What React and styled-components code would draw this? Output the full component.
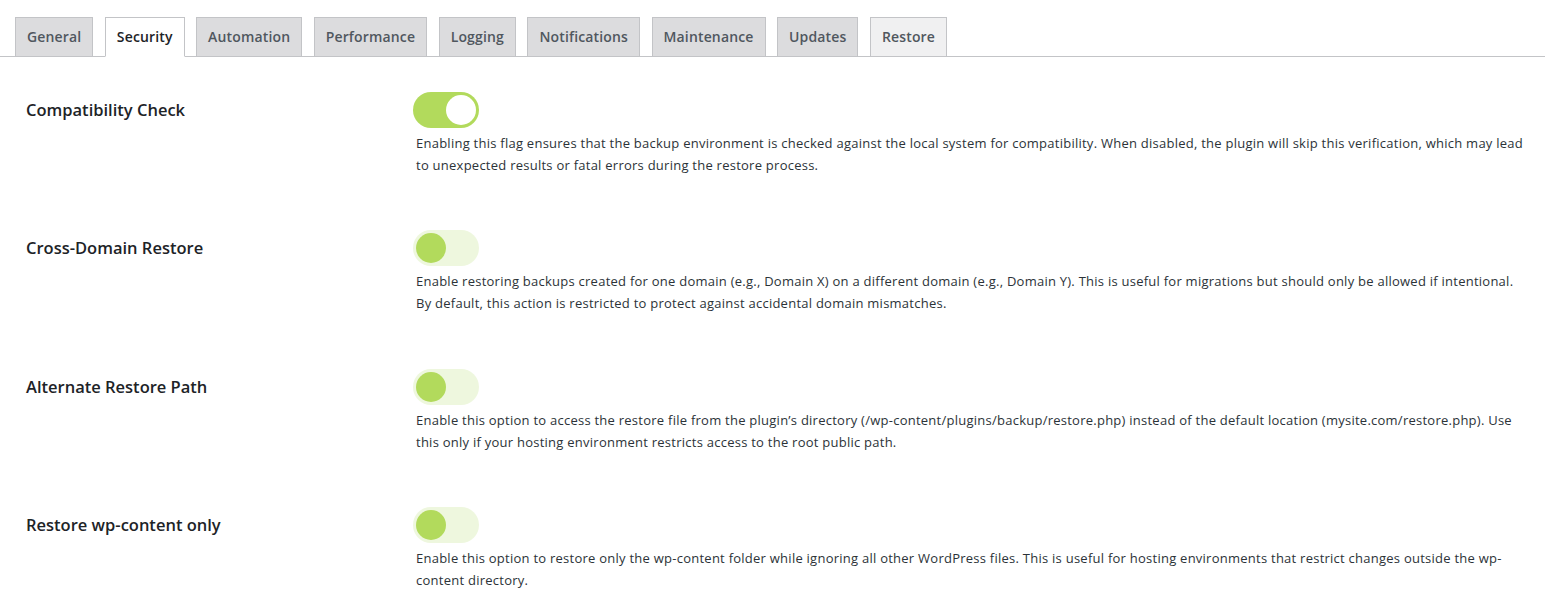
import React, { useState } from 'react'
import styled, { createGlobalStyle } from 'styled-components'

const GlobalStyle = createGlobalStyle`
  html, body {
    margin: 0;
    padding: 0;
    background: #fff;
    font-family: 'Open Sans', 'Noto Sans', sans-serif;
  }
`

const Page = styled.div`
  padding: 17px 0 0 0;
`

const TabBar = styled.nav`
  display: flex;
  gap: 11.5px;
  padding-left: 15px;
  border-bottom: 1px solid #c3c4c7;
`

const Tab = styled.a`
  display: block;
  height: 38px;
  line-height: 38px;
  padding: 0 11px;
  margin-bottom: -1px;
  font-size: 14px;
  font-weight: 600;
  letter-spacing: 0.15px;
  color: ${props => (props.active ? '#1d2327' : '#50575e')};
  background: ${props => (props.active ? '#fff' : props.hover ? '#f0f0f1' : '#dcdcde')};
  border: 1px solid #c3c4c7;
  border-bottom-color: ${props => (props.active ? '#fff' : '#c3c4c7')};
  cursor: pointer;
`

const Settings = styled.div`
  padding: 35px 15px 0 26px;
  display: flex;
  flex-direction: column;
  gap: 54.3px;
`

const Row = styled.div`
  display: grid;
  grid-template-columns: 387px 1fr;
`

const Label = styled.div`
  font-size: 16.5px;
  font-weight: 600;
  color: #1d2327;
  line-height: 36px;
`

const Field = styled.div`
  display: flex;
  flex-direction: column;
  align-items: flex-start;
`

const Switch = styled.button`
  width: 66px;
  height: 36px;
  border: none;
  border-radius: 18px;
  padding: 3px;
  display: flex;
  justify-content: ${props => (props.on ? 'flex-end' : 'flex-start')};
  background: ${props => (props.on ? '#b2da5c' : '#eef7de')};
  cursor: pointer;
`

const Knob = styled.span`
  width: 30px;
  height: 30px;
  border-radius: 50%;
  background: ${props => (props.on ? '#fff' : '#b2da5c')};
`

const Description = styled.p`
  margin: 4px 0 0 3px;
  font-size: 13px;
  line-height: 22px;
  letter-spacing: 0.25px;
  color: #2c3338;
`

const tabs = ['General', 'Security', 'Automation', 'Performance', 'Logging', 'Notifications', 'Maintenance', 'Updates', 'Restore']

const options = [
  {
    label: 'Compatibility Check',
    on: true,
    text: 'Enabling this flag ensures that the backup environment is checked against the local system for compatibility. When disabled, the plugin will skip this verification, which may lead to unexpected results or fatal errors during the restore process.'
  },
  {
    label: 'Cross-Domain Restore',
    on: false,
    text: 'Enable restoring backups created for one domain (e.g., Domain X) on a different domain (e.g., Domain Y). This is useful for migrations but should only be allowed if intentional. By default, this action is restricted to protect against accidental domain mismatches.'
  },
  {
    label: 'Alternate Restore Path',
    on: false,
    text: 'Enable this option to access the restore file from the plugin\u2019s directory (/wp-content/plugins/backup/restore.php) instead of the default location (mysite.com/restore.php). Use this only if your hosting environment restricts access to the root public path.'
  },
  {
    label: 'Restore wp-content only',
    on: false,
    text: 'Enable this option to restore only the wp-content folder while ignoring all other WordPress files. This is useful for hosting environments that restrict changes outside the wp-content directory.'
  }
]

const App = () => {
  const [values, setValues] = useState(options.map(o => o.on))

  const toggle = i => {
    setValues(values.map((v, j) => (j === i ? !v : v)))
  }

  return (
    <Page>
      <GlobalStyle />
      <TabBar>
        {tabs.map(t => (
          <Tab key={t} active={t === 'Security'} hover={t === 'Restore'}>
            {t}
          </Tab>
        ))}
      </TabBar>
      <Settings>
        {options.map((o, i) => (
          <Row key={o.label}>
            <Label>{o.label}</Label>
            <Field>
              <Switch on={values[i]} onClick={() => toggle(i)}>
                <Knob on={values[i]} />
              </Switch>
              <Description>{o.text}</Description>
            </Field>
          </Row>
        ))}
      </Settings>
    </Page>
  )
}

export default App
